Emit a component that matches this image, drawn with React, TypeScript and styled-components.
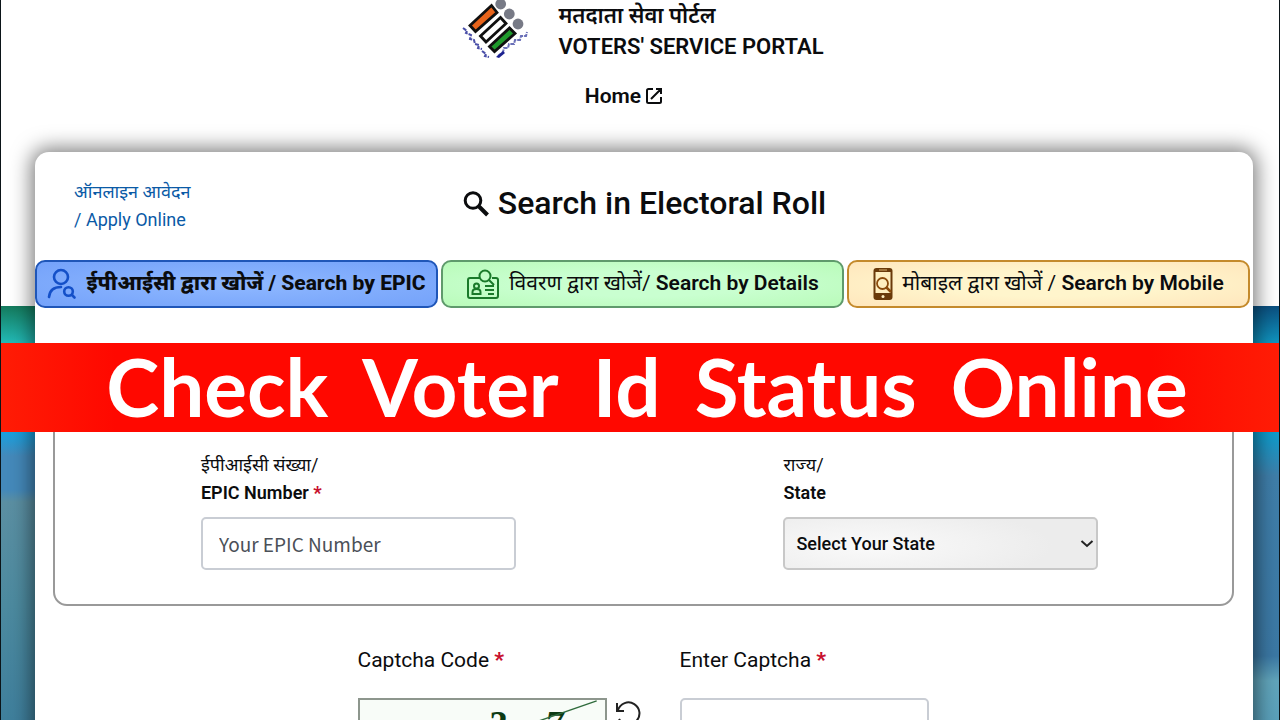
import React from "react";
import styled, { createGlobalStyle } from "styled-components";

const GlobalStyle = createGlobalStyle`
  *, *::before, *::after { box-sizing: border-box; }
  body { margin: 0; background: #fff; color: #0b0c0e; font-family: Roboto, "Noto Sans", sans-serif; }
  h1, h2, p { margin: 0; }
  button, input, select { font-family: inherit; color: inherit; }
`;

const Page = styled.div`
  position: relative;
  display: flex;
  flex-direction: column;
  height: 100vh;
  overflow: auto;
  scrollbar-width: none;
  border: solid #0b1418;
  border-width: 0 1px;
  background-color: #fff;
  background-image:
    linear-gradient(#147a5c 0, #22b8b4 36px, #1b9fdc 128px, #4489ba 150px, #4489ba 184px, #5b8fa2 196px, #4c8a9f 300px, #3f7f9c 100%),
    linear-gradient(#0b4f7f 0, #1093be 36px, #0f9bcb 128px, #3f7ea9 170px, #3b78a4 350px, #61a5bb 375px, #5aa0ba 100%);
  background-size: 50% calc(100% - 306px);
  background-position: left bottom, right bottom;
  background-repeat: no-repeat;
`;

const Header = styled.header`
  display: flex;
  flex-direction: column;
  align-items: center;
  flex: none;
  height: 152px;
`;

const Brand = styled.div`
  display: flex;
  align-items: flex-start;
  gap: 28px;
  margin-left: 6px;
`;

const BrandText = styled.div`
  font-size: 22px;
  font-weight: 600;
  line-height: 31px;
`;

const HomeLink = styled.a`
  display: flex;
  align-items: center;
  gap: 4px;
  margin: 20px 32px 0 0;
  font-size: 21px;
  font-weight: 600;
  line-height: 28px;
  color: inherit;
  text-decoration: none;
`;

const Card = styled.main`
  flex: 1 0 auto;
  margin: 0 26px 0 34px;
  border-radius: 14px 14px 0 0;
  background: #fff;
  box-shadow: 0 0 20px 4px rgba(0, 0, 0, 0.5);
`;

const CardHeader = styled.div`
  display: grid;
  grid-template-columns: 1fr auto 1fr;
  padding: 26px 39px 26px;
`;

const ApplyLink = styled.a`
  justify-self: start;
  font-size: 18px;
  line-height: 28px;
  color: #0a5aa6;
  text-decoration: none;
`;

const Title = styled.h1`
  display: flex;
  align-items: center;
  gap: 8px;
  height: 50px;
  font-size: 32px;
  font-weight: 500;
`;

const Tabs = styled.nav`
  display: grid;
  grid-template-columns: repeat(3, 1fr);
  gap: 3px;
  padding-right: 3px;
`;

const Tab = styled.button<{ $tint: string; $edge: string; $strong?: boolean }>`
  display: flex;
  align-items: center;
  justify-content: center;
  gap: 9px;
  height: 48px;
  padding: 0;
  border: 2px solid ${(p) => p.$edge};
  border-radius: 10px;
  background: ${(p) => p.$tint};
  font-size: 21px;
  font-weight: ${(p) => (p.$strong ? 800 : 400)};
  white-space: nowrap;

  span { padding-bottom: 4px; }
  b { font-weight: ${(p) => (p.$strong ? 800 : 600)}; }
`;

const Panel = styled.section`
  display: grid;
  grid-template-columns: 1fr 1fr;
  margin: 63px 19px 0 18px;
  padding: 78px 0 34px 12px;
  border: 2px solid #999;
  border-radius: 14px;
`;

const Field = styled.div`
  display: flex;
  flex-direction: column;
  width: 54%;
  margin: 0 auto;
`;

const Label = styled.label`
  margin-bottom: 10px;
  font-size: 18px;
  line-height: 28px;

  b { font-weight: 600; }
`;

const Required = styled.span`
  color: #c8102e;
  font-weight: 900;
`;

const TextBox = styled.input`
  width: 100%;
  height: 53px;
  padding: 0 16px;
  border: 2px solid #c9cdd4;
  border-radius: 5px;
  background: #fff;
  font-family: "Noto Sans CJK SC", "Noto Sans", sans-serif;
  font-size: 19px;

  &::placeholder { color: #4b5058; opacity: 1; }
`;

const SelectWrap = styled.div`
  position: relative;

  svg { position: absolute; right: 4px; top: 19px; pointer-events: none; }
`;

const Select = styled.select`
  appearance: none;
  width: 100%;
  height: 53px;
  padding: 0 11px;
  border: 2px solid #c8c8c8;
  border-radius: 5px;
  background: radial-gradient(ellipse 180px 40px at 28% 55%, #fafafa, #ececec);
  font-size: 18px;
  font-weight: 500;
`;

const CaptchaRow = styled.section`
  display: grid;
  grid-template-columns: 249px 249px;
  justify-content: center;
  gap: 73px;
  padding: 39px 2px 32px 0;
`;

const CaptchaField = styled.div`
  display: flex;
  flex-direction: column;
  gap: 23px;

  label, p { font-size: 21px; line-height: 30px; }
`;

const CaptchaImage = styled.div`
  display: flex;
  align-items: flex-start;
  gap: 8px;
`;

const CaptchaSvg = styled.svg`
  flex: none;
  border: 2px solid #8d968d;
  background: #f8fcf8;
`;

const Refresh = styled.button`
  display: flex;
  margin-right: -34px;
  padding: 2px 0;
  border: 0;
  background: none;
`;

const Banner = styled.h2`
  position: absolute;
  top: 343px;
  left: 0;
  right: 0;
  display: flex;
  align-items: center;
  justify-content: center;
  gap: 34px;
  height: 89px;
  padding: 0 0 4px 14px;
  background: linear-gradient(90deg, #ff1c05, #ff0800 9%, #ff0800 90%, #ff1c05);
  color: #fff;
  font-family: Lato, sans-serif;
  font-size: 80px;
  font-weight: 700;
  line-height: 80px;
`;

const VoterLogo = () => (
  <svg width="68" height="62" viewBox="0 0 68 62" aria-hidden="true">
    <g fill="#777a86">
      <circle cx="38.700" cy="4" r="5.400" />
      <circle cx="47.300" cy="14" r="5.400" />
      <circle cx="56" cy="24" r="5.400" />
    </g>
    <g stroke="#101010" strokeWidth="2.800">
      <path d="m8 25.500 21.500-20 5.500 7-21.500 19z" fill="#e8641b" />
      <path d="m18.500 36 20-18.500 5.500 6-20 18.500z" fill="#fff" />
      <path d="m27.500 46.500 20-18.500 5.500 5.500-20.500 18z" fill="#1f9a2c" />
    </g>
    <path d="m1 28 4 3-1 2 5 2-1 4 4 1 1 4 4 1-1 3 4 1m0 2 4 3-1 2 4 1" fill="none" stroke="#4a4fa8" strokeWidth="2" strokeDasharray="4 1" />
    <path d="m36 56 5-4 1-4 4 0 1-4 5 0 1-4 5 0 1-4 5 0 1-4" fill="none" stroke="#6a70b8" strokeWidth="2" strokeDasharray="4 1" />
    <path d="m34 57 7-6 2 2-6 5z" fill="#1d2290" />
  </svg>
);

const ExternalIcon = () => (
  <svg width="18" height="18" viewBox="0 0 18 18" fill="none" stroke="currentColor" strokeWidth="2" aria-hidden="true">
    <path d="M8 2H3.500Q2 2 2 3.500v11Q2 16 3.500 16h11q1.500 0 1.500-1.500V10M6 12 15.500 2.500M11 2h5v5" />
  </svg>
);

const SearchIcon = () => (
  <svg width="28" height="28" viewBox="0 0 28 28" fill="none" stroke="currentColor" aria-hidden="true">
    <circle cx="11" cy="11.500" r="7.800" strokeWidth="3" />
    <path d="m17 17.500 8.500 8.500" strokeWidth="4" />
  </svg>
);

const PersonSearchIcon = () => (
  <svg width="30" height="32" viewBox="0 0 30 32" fill="none" stroke="#1450c8" strokeWidth="2.600" strokeLinecap="round" aria-hidden="true">
    <circle cx="14" cy="9" r="7" />
    <path d="M2 29q1-10 12-10" />
    <circle cx="21.500" cy="23.500" r="4.300" />
    <path d="m25 27 2.500 2.500" />
  </svg>
);

const IdCardIcon = () => (
  <svg width="34" height="32" viewBox="0 0 34 32" fill="none" stroke="#1a7a2a" strokeWidth="2" aria-hidden="true">
    <path d="M14 10H4q-2 0-2 2v16q0 2 2 2h26q2 0 2-2V12q0-2-2-2h-4" />
    <circle cx="19" cy="8" r="5.500" />
    <path d="m23 12 5 5M19 18h9M19 22h9M22 26h6" />
    <circle cx="10.500" cy="18" r="2.500" />
    <path d="M6.500 26v-2q0-3 4-3t4 3v2z" />
  </svg>
);

const MobileSearchIcon = () => (
  <svg width="20" height="34" viewBox="0 0 20 34" aria-hidden="true">
    <rect x="0.500" y="1" width="19" height="32" rx="3" fill="#6a3a0a" />
    <path d="M2.500 5h15v21h-15z" fill="#ffefc0" />
    <g fill="none" stroke="#8a4b0c">
      <circle cx="9.500" cy="16.500" r="5.500" strokeWidth="1.800" />
      <path d="m13 20 5 5" strokeWidth="2.500" />
    </g>
    <path d="M6 3h8" stroke="#d8b070" />
    <circle cx="10" cy="29.500" r="1.500" fill="#ffefc0" />
  </svg>
);

const ChevronIcon = () => (
  <svg width="14" height="14" viewBox="0 0 14 14" fill="none" stroke="#222" strokeWidth="2" aria-hidden="true">
    <path d="m1.500 5 5.500 5 5.500-5" />
  </svg>
);

const RefreshIcon = () => (
  <svg width="26" height="28" viewBox="0 0 26 28" fill="none" stroke="#222" strokeWidth="2" aria-hidden="true">
    <path d="M3 10A11 11 0 1 1 4 19" />
    <path d="M2 3v8h7" />
  </svg>
);

export default function App() {
  return (
    <>
      <GlobalStyle />
      <Page>
        <Header>
          <Brand>
            <VoterLogo />
            <BrandText>
              <p lang="hi">मतदाता सेवा पोर्टल</p>
              <p>VOTERS' SERVICE PORTAL</p>
            </BrandText>
          </Brand>
          <HomeLink href="#home">
            Home <ExternalIcon />
          </HomeLink>
        </Header>
        <Card>
          <CardHeader>
            <ApplyLink href="#apply">
              <span lang="hi">ऑनलाइन आवेदन</span>
              <br />/ Apply Online
            </ApplyLink>
            <Title>
              <SearchIcon />
              Search in Electoral Roll
            </Title>
          </CardHeader>
          <Tabs>
            <Tab type="button" $strong $edge="#1f56b8" $tint="radial-gradient(ellipse at center, #8fb8ff, #74a2fa)">
              <PersonSearchIcon />
              <span>ईपीआईसी द्वारा खोजें / <b>Search by EPIC</b></span>
            </Tab>
            <Tab type="button" $edge="#5f9a6c" $tint="radial-gradient(ellipse at center, #c9ffd0 40%, #b9fbb9)">
              <IdCardIcon />
              <span>विवरण द्वारा खोजें/ <b>Search by Details</b></span>
            </Tab>
            <Tab type="button" $edge="#c48a2c" $tint="radial-gradient(ellipse at center, #fff5cc 40%, #ffe6bc)">
              <MobileSearchIcon />
              <span>मोबाइल द्वारा खोजें / <b>Search by Mobile</b></span>
            </Tab>
          </Tabs>
          <Panel>
            <Field>
              <Label htmlFor="epic">
                <span lang="hi">ईपीआईसी संख्या/</span>
                <br />
                <b>EPIC Number</b> <Required>*</Required>
              </Label>
              <TextBox id="epic" placeholder="Your EPIC Number" />
            </Field>
            <Field>
              <Label htmlFor="state">
                <span lang="hi">राज्य/</span>
                <br />
                <b>State</b>
              </Label>
              <SelectWrap>
                <Select id="state">
                  <option>Select Your State</option>
                </Select>
                <ChevronIcon />
              </SelectWrap>
            </Field>
          </Panel>
          <CaptchaRow>
            <CaptchaField>
              <p>Captcha Code <Required>*</Required></p>
              <CaptchaImage>
                <CaptchaSvg width="249" height="53" viewBox="0 0 249 53" role="img" aria-label="Captcha">
                  <g fill="#0c3a14" fontFamily="Liberation Serif, serif" fontWeight="700" fontSize="40">
                    <text x="132" y="40">3</text>
                    <text x="192" y="40" fontStyle="italic">7</text>
                  </g>
                  <path d="M170 28 248 1" stroke="#2f6b3c" strokeWidth="1.500" />
                </CaptchaSvg>
                <Refresh type="button" aria-label="Refresh captcha">
                  <RefreshIcon />
                </Refresh>
              </CaptchaImage>
            </CaptchaField>
            <CaptchaField>
              <label htmlFor="captcha">Enter Captcha <Required>*</Required></label>
              <TextBox id="captcha" />
            </CaptchaField>
          </CaptchaRow>
        </Card>
        <Banner>
          <span>Check</span> <span>Voter</span> <span>Id</span> <span>Status</span> <span>Online</span>
        </Banner>
      </Page>
    </>
  );
}
